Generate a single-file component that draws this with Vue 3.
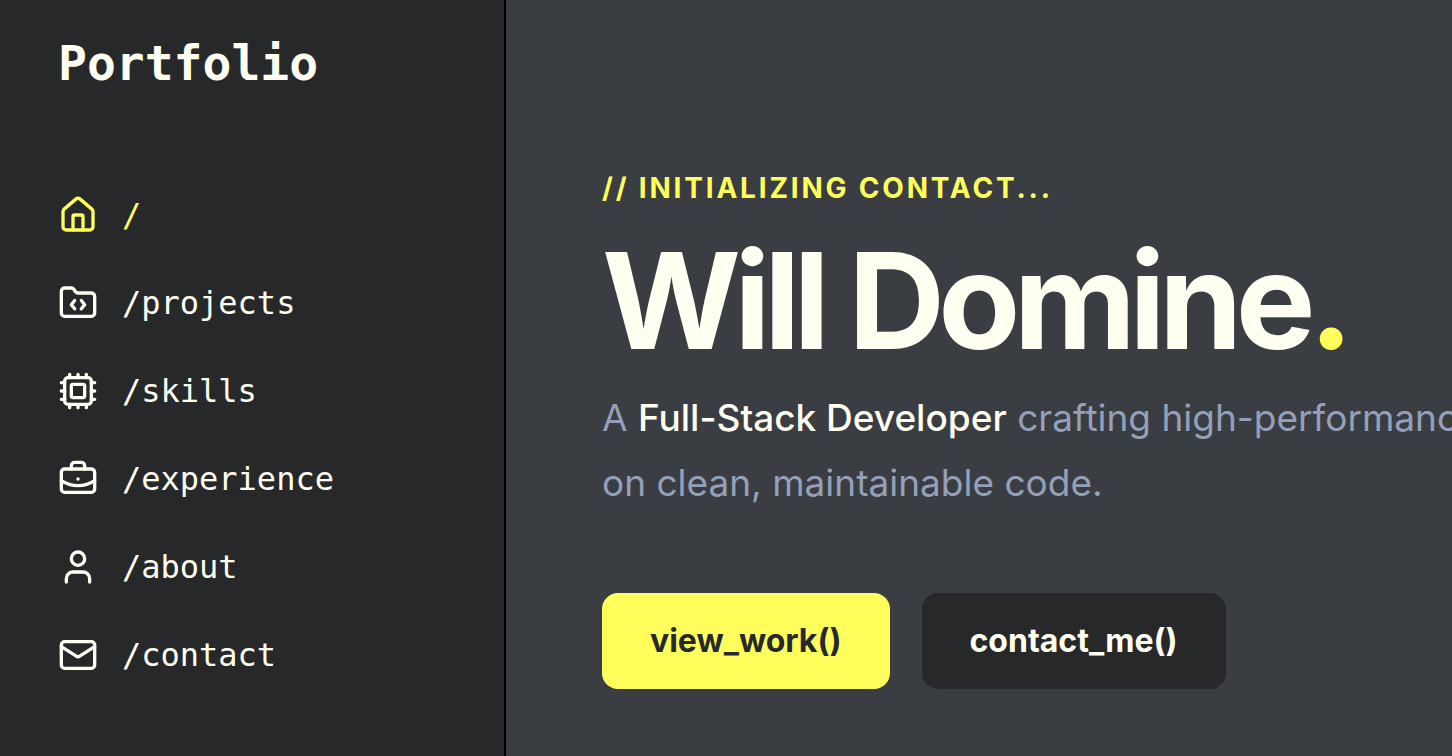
<template>
  <div class="layout">
    <aside class="sidebar">
      <div class="brand">Portfolio</div>
      <nav class="menu">
        <a
          v-for="link in links"
          :key="link.label"
          :href="link.href"
          class="menu-link"
          :class="{ active: link.href === current }"
          @click="current = link.href"
        >
          <svg class="icon" viewBox="0 0 24 24" aria-hidden="true">
            <path v-for="d in link.paths" :key="d" :d="d" />
          </svg>
          <span>{{ link.label }}</span>
        </a>
      </nav>
    </aside>

    <main class="hero">
      <p class="eyebrow">// INITIALIZING CONTACT...</p>
      <h1 class="title">Will Domine<span class="dot">.</span></h1>
      <p class="intro">
        A <span class="role">Full-Stack Developer</span> crafting high-performance<br>
        on clean, maintainable code.
      </p>
      <div class="actions">
        <button type="button" class="btn primary">view_work()</button>
        <button type="button" class="btn secondary">contact_me()</button>
      </div>
    </main>
  </div>
</template>

<script setup>
import { ref } from 'vue';

const current = ref('#/');

const links = [
  {
    label: '/',
    href: '#/',
    paths: [
      'M15 21v-8a1 1 0 0 0-1-1h-4a1 1 0 0 0-1 1v8',
      'M3 10a2 2 0 0 1 .709-1.528l7-5.999a2 2 0 0 1 2.582 0l7 5.999A2 2 0 0 1 21 10v9a2 2 0 0 1-2 2H5a2 2 0 0 1-2-2z',
    ],
  },
  {
    label: '/projects',
    href: '#/projects',
    paths: [
      'M10 10.5 8 13l2 2.5',
      'm14 10.5 2 2.5-2 2.5',
      'M20 20a2 2 0 0 0 2-2V8a2 2 0 0 0-2-2h-7.9a2 2 0 0 1-1.69-.9L9.6 3.9A2 2 0 0 0 7.93 3H4a2 2 0 0 0-2 2v13a2 2 0 0 0 2 2z',
    ],
  },
  {
    label: '/skills',
    href: '#/skills',
    paths: [
      'M12 20v2M12 2v2M17 20v2M17 2v2M7 20v2M7 2v2',
      'M2 12h2M2 17h2M2 7h2M20 12h2M20 17h2M20 7h2',
      'M6 4h12a2 2 0 0 1 2 2v12a2 2 0 0 1-2 2H6a2 2 0 0 1-2-2V6a2 2 0 0 1 2-2z',
      'M9 8h6a1 1 0 0 1 1 1v6a1 1 0 0 1-1 1H9a1 1 0 0 1-1-1V9a1 1 0 0 1 1-1z',
    ],
  },
  {
    label: '/experience',
    href: '#/experience',
    paths: [
      'M12 12h.01',
      'M16 6V4a2 2 0 0 0-2-2h-4a2 2 0 0 0-2 2v2',
      'M22 13a18.15 18.15 0 0 1-20 0',
      'M4 6h16a2 2 0 0 1 2 2v10a2 2 0 0 1-2 2H4a2 2 0 0 1-2-2V8a2 2 0 0 1 2-2z',
    ],
  },
  {
    label: '/about',
    href: '#/about',
    paths: [
      'M19 21v-2a4 4 0 0 0-4-4H9a4 4 0 0 0-4 4v2',
      'M16 7a4 4 0 1 1-8 0a4 4 0 1 1 8 0z',
    ],
  },
  {
    label: '/contact',
    href: '#/contact',
    paths: [
      'm22 7-8.991 5.727a2 2 0 0 1-2.009 0L2 7',
      'M4 4h16a2 2 0 0 1 2 2v12a2 2 0 0 1-2 2H4a2 2 0 0 1-2-2V6a2 2 0 0 1 2-2z',
    ],
  },
];
</script>

<style>
body {
  margin: 0;
  background-color: #3a3d42;
}
</style>

<style scoped>
.layout {
  display: flex;
  min-height: 100vh;
  overflow: hidden;
  background-color: #3a3d42;
  color: #fffff2;
  font-family: 'Inter', sans-serif;
}

.sidebar {
  flex: none;
  box-sizing: border-box;
  width: 506px;
  padding: 31px 58px;
  background-color: #27282a;
  border-right: 2px solid #000;
  font-family: 'DejaVu Sans Mono', monospace;
}

.brand {
  font-size: 48px;
  line-height: 64px;
  font-weight: 700;
}

.menu {
  display: flex;
  flex-direction: column;
  gap: 40px;
  margin-top: 96px;
}

.menu-link {
  display: flex;
  align-items: center;
  gap: 24px;
  color: inherit;
  font-size: 32px;
  line-height: 48px;
  text-decoration: none;
}

.menu-link.active {
  color: #ffff5c;
}

.icon {
  width: 40px;
  height: 40px;
  fill: none;
  stroke: currentColor;
  stroke-width: 2;
  stroke-linecap: round;
  stroke-linejoin: round;
}

.hero {
  flex: 1;
  min-width: 0;
  padding: 168px 0 64px 96px;
  white-space: nowrap;
}

.eyebrow {
  margin: 0;
  color: #ffff5c;
  font-size: 28px;
  line-height: 40px;
  font-weight: 700;
  letter-spacing: 0.1em;
}

.title {
  margin: 20px 0 0;
  font-size: 134px;
  line-height: 144px;
  font-weight: 700;
  letter-spacing: -0.05em;
}

.dot {
  color: #ffff5c;
}

.intro {
  margin: 13px 0 0;
  color: #94a0b9;
  font-size: 37px;
  line-height: 65px;
}

.role {
  color: #fffff2;
  font-weight: 500;
}

.actions {
  display: flex;
  gap: 32px;
  margin-top: 78px;
}

.btn {
  padding: 24px 48px;
  border: none;
  border-radius: 16px;
  font-family: inherit;
  font-size: 32px;
  line-height: 48px;
  font-weight: 700;
  cursor: pointer;
}

.primary {
  background-color: #ffff5c;
  color: #27282a;
}

.secondary {
  background-color: #27282a;
  color: #fffff2;
}
</style>
